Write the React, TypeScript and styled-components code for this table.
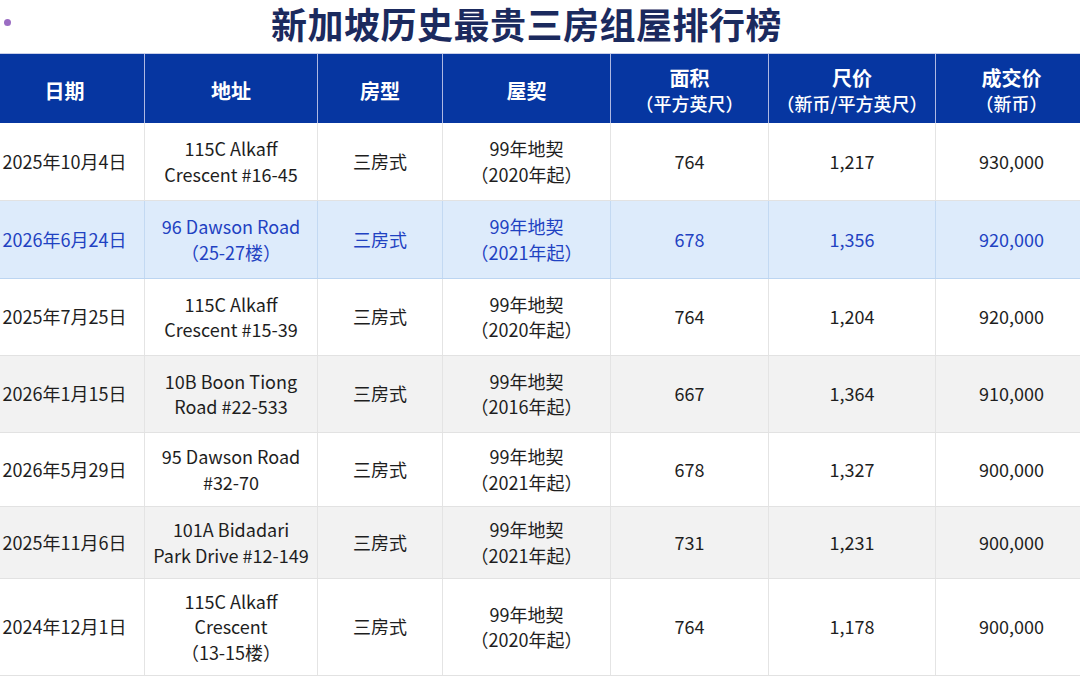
import React from "react";
import styled, { createGlobalStyle } from "styled-components";

const GlobalStyle = createGlobalStyle`
  html, body {
    margin: 0;
    padding: 0;
    background: #ffffff;
    overflow: hidden;
  }
  body {
    font-family: "Noto Sans CJK SC", "Noto Sans", sans-serif;
  }
`;

const Page = styled.div`
  width: 1080px;
  height: 687px;
  overflow: hidden;
  background: #ffffff;
`;

const TitleBar = styled.div`
  display: flex;
  align-items: flex-start;
  height: 53px;
`;

const Dot = styled.span`
  width: 7px;
  height: 7px;
  border-radius: 50%;
  background: #9b6dc3;
  margin-left: 4px;
  margin-top: 19px;
  flex: none;
`;

const Title = styled.h1`
  flex: 1;
  margin: 0;
  padding-right: 38px;
  text-align: center;
  font-family: "Noto Sans CJK SC", sans-serif;
  font-size: 36px;
  line-height: 46px;
  font-weight: 700;
  color: #1b2a5e;
  letter-spacing: 0.5px;
  white-space: nowrap;
`;

const COLS = "160px 173px 125px 168px 158px 167px 151px";

const Table = styled.div`
  margin-left: -15px;
  width: 1102px;
`;

const HeaderRow = styled.div`
  display: grid;
  grid-template-columns: ${COLS};
  height: 70px;
  background: #0636a1;
  border-top: 1px solid #c9cfe9;
  box-sizing: border-box;
`;

const HeadCell = styled.div`
  display: flex;
  flex-direction: column;
  align-items: center;
  justify-content: center;
  gap: 2px;
  color: #ffffff;
  border-right: 1px solid #aeb8e2;
  padding-top: 4px;
  &:last-child {
    border-right: none;
  }
`;

const HeadMain = styled.span`
  font-size: 20px;
  line-height: 24px;
  font-weight: 700;
`;

const HeadSub = styled.span`
  font-size: 18px;
  line-height: 23px;
  font-weight: 500;
`;

type Tone = "plain" | "grey" | "hi";

const rowBg: Record<Tone, string> = {
  plain: "#ffffff",
  grey: "#f2f2f2",
  hi: "#ddebfb",
};

const Row = styled.div<{ $tone: Tone; $h: number }>`
  display: grid;
  grid-template-columns: ${COLS};
  height: ${(p) => p.$h}px;
  background: ${(p) => rowBg[p.$tone]};
  color: ${(p) => (p.$tone === "hi" ? "#1f42c2" : "#1e1e1e")};
  border-bottom: 1px solid ${(p) => (p.$tone === "hi" ? "#bcd5f1" : "#e2e2e2")};
  box-sizing: border-box;
`;

const Cell = styled.div<{ $hi?: boolean }>`
  display: flex;
  flex-direction: column;
  align-items: center;
  justify-content: center;
  text-align: center;
  font-size: 18px;
  line-height: 25.5px;
  border-right: 1px solid ${(p) => (p.$hi ? "#c3d9f2" : "#e4e4e4")};
  &:last-child {
    border-right: none;
  }
`;

type RowData = {
  date: string;
  addr: string[];
  type: string;
  lease: string[];
  area: string;
  psf: string;
  price: string;
  tone: Tone;
  h: number;
};

const rows: RowData[] = [
  {
    date: "2025年10月4日",
    addr: ["115C Alkaff", "Crescent #16-45"],
    type: "三房式",
    lease: ["99年地契", "（2020年起）"],
    area: "764",
    psf: "1,217",
    price: "930,000",
    tone: "plain",
    h: 78,
  },
  {
    date: "2026年6月24日",
    addr: ["96 Dawson Road", "（25-27楼）"],
    type: "三房式",
    lease: ["99年地契", "（2021年起）"],
    area: "678",
    psf: "1,356",
    price: "920,000",
    tone: "hi",
    h: 78,
  },
  {
    date: "2025年7月25日",
    addr: ["115C Alkaff", "Crescent #15-39"],
    type: "三房式",
    lease: ["99年地契", "（2020年起）"],
    area: "764",
    psf: "1,204",
    price: "920,000",
    tone: "plain",
    h: 77,
  },
  {
    date: "2026年1月15日",
    addr: ["10B Boon Tiong", "Road #22-533"],
    type: "三房式",
    lease: ["99年地契", "（2016年起）"],
    area: "667",
    psf: "1,364",
    price: "910,000",
    tone: "grey",
    h: 77,
  },
  {
    date: "2026年5月29日",
    addr: ["95 Dawson Road", "#32-70"],
    type: "三房式",
    lease: ["99年地契", "（2021年起）"],
    area: "678",
    psf: "1,327",
    price: "900,000",
    tone: "plain",
    h: 74,
  },
  {
    date: "2025年11月6日",
    addr: ["101A Bidadari", "Park Drive #12-149"],
    type: "三房式",
    lease: ["99年地契", "（2021年起）"],
    area: "731",
    psf: "1,231",
    price: "900,000",
    tone: "grey",
    h: 72,
  },
  {
    date: "2024年12月1日",
    addr: ["115C Alkaff", "Crescent", "（13-15楼）"],
    type: "三房式",
    lease: ["99年地契", "（2020年起）"],
    area: "764",
    psf: "1,178",
    price: "900,000",
    tone: "plain",
    h: 97,
  },
];

const headers: { main: string; sub?: string }[] = [
  { main: "日期" },
  { main: "地址" },
  { main: "房型" },
  { main: "屋契" },
  { main: "面积", sub: "（平方英尺）" },
  { main: "尺价", sub: "（新币/平方英尺）" },
  { main: "成交价", sub: "（新币）" },
];

const Lines = ({ lines }: { lines: string[] }) => (
  <>
    {lines.map((l, i) => (
      <span key={i}>{l}</span>
    ))}
  </>
);

export default function App() {
  return (
    <Page>
      <GlobalStyle />
      <TitleBar>
        <Dot />
        <Title>新加坡历史最贵三房组屋排行榜</Title>
      </TitleBar>
      <Table>
        <HeaderRow>
          {headers.map((h) => (
            <HeadCell key={h.main}>
              <HeadMain>{h.main}</HeadMain>
              {h.sub && <HeadSub>{h.sub}</HeadSub>}
            </HeadCell>
          ))}
        </HeaderRow>
        {rows.map((r, i) => {
          const hi = r.tone === "hi";
          return (
            <Row key={i} $tone={r.tone} $h={r.h}>
              <Cell $hi={hi}>{r.date}</Cell>
              <Cell $hi={hi}>
                <Lines lines={r.addr} />
              </Cell>
              <Cell $hi={hi}>{r.type}</Cell>
              <Cell $hi={hi}>
                <Lines lines={r.lease} />
              </Cell>
              <Cell $hi={hi}>{r.area}</Cell>
              <Cell $hi={hi}>{r.psf}</Cell>
              <Cell $hi={hi}>{r.price}</Cell>
            </Row>
          );
        })}
      </Table>
    </Page>
  );
}
